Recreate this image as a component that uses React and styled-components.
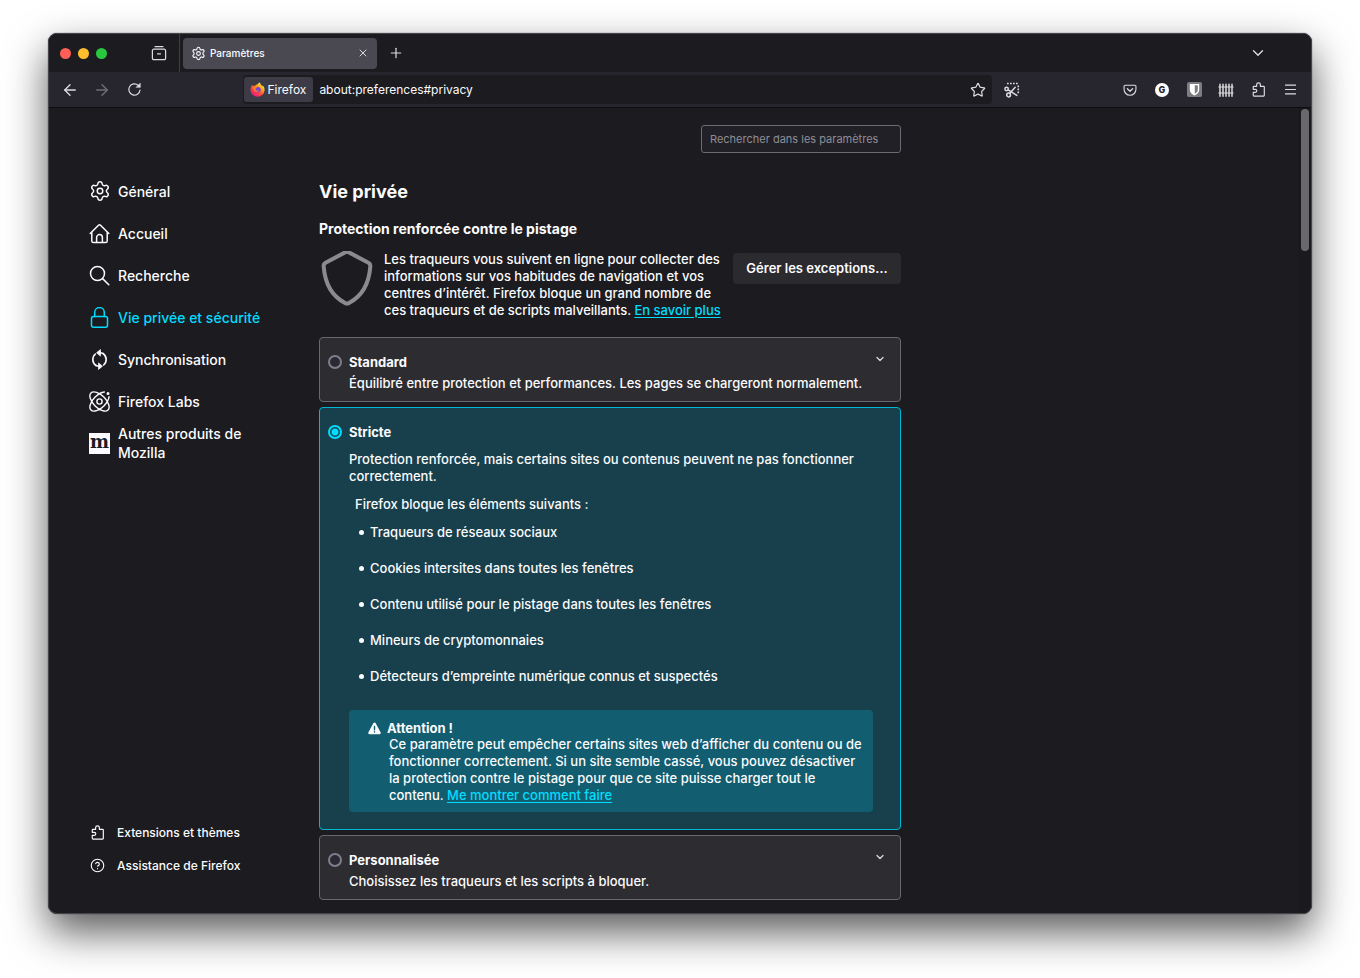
import React, { useState } from "react";
import styled, { createGlobalStyle } from "styled-components";
import {
  ArrowLeft,
  ArrowRight,
  ChevronDown,
  CircleHelp,
  Menu,
  Plus,
  Settings,
  Star,
  X,
} from "lucide-react";

const GlobalStyle = createGlobalStyle`
  * {
    box-sizing: border-box;
  }
  body {
    margin: 0;
    background: #fff;
    color: #fbfbfe;
    font-family: Inter, "Liberation Sans", sans-serif;
    font-size: 13px;
    font-weight: 500;
    line-height: 17px;
  }
  button, input {
    font: inherit;
    color: inherit;
  }
  svg {
    display: block;
    flex-shrink: 0;
  }
`;

const Desktop = styled.div`
  display: flex;
  min-height: 100vh;
  padding: 33px 48px 64px;
`;

const Window = styled.div`
  flex: 1;
  min-width: 0;
  display: flex;
  flex-direction: column;
  overflow: hidden;
  border: 1px solid #45454a;
  border-radius: 9px;
  background: #1c1b1f;
  box-shadow: 0 18px 40px rgba(0, 0, 0, 0.65), 0 0 1px #000;
`;

const TabBar = styled.header`
  display: flex;
  align-items: center;
  height: 38px;
  padding-left: 11px;
  background: #1c1b1f;
`;

const Lights = styled.div`
  display: flex;
  gap: 7px;
`;

const Light = styled.span`
  width: 11px;
  height: 11px;
  border-radius: 50%;
  background: ${(props) => props.color};
`;

const IconButton = styled.button`
  display: flex;
  align-items: center;
  justify-content: center;
  flex-shrink: 0;
  width: 32px;
  height: 28px;
  padding: 0;
  border: 0;
  background: none;
  color: #dcdce0;
  opacity: ${(props) => (props.disabled ? 0.4 : 1)};
`;

const HistoryButton = styled(IconButton)`
  margin-left: 36px;
`;

const TabDivider = styled.span`
  align-self: stretch;
  width: 1px;
  margin: 0 3px 0 4px;
  background: #3f3f44;
`;

const Tab = styled.div`
  display: flex;
  align-items: center;
  gap: 4px;
  width: 194px;
  height: 31px;
  margin-right: 3px;
  padding: 0 6px 0 8px;
  border-radius: 4px;
  background: #4a4951;
  font-size: 10px;
`;

const TabTitle = styled.span`
  flex: 1;
`;

const CloseButton = styled(IconButton)`
  width: 16px;
  height: 16px;
`;

const ListTabs = styled(IconButton)`
  margin-left: auto;
  margin-right: 37px;
`;

const Toolbar = styled.div`
  display: flex;
  align-items: center;
  height: 36px;
  padding: 0 5px;
  background: #27262f;
  border-bottom: 1px solid #0e0d11;
`;

const Spacer = styled.span`
  flex: 1;
`;

const UrlBar = styled.div`
  flex: 0 1 749px;
  display: flex;
  align-items: center;
  height: 29px;
  margin: 0 4px 0 6px;
  padding: 0 0 0 1px;
  border-radius: 4px;
  background: #1c1b1f;
  font-weight: 400;
`;

const Identity = styled.button`
  display: flex;
  align-items: center;
  gap: 3px;
  height: 25px;
  padding: 0 7px 0 6px;
  border: 0;
  border-radius: 3px;
  background: #3d3c46;
  font-size: 12px;
`;

const UrlInput = styled.input`
  flex: 1;
  min-width: 0;
  padding: 0 6px;
  border: 0;
  outline: 0;
  background: none;
  font-size: 12px;
`;

const StarButton = styled(IconButton)`
  width: 28px;
`;

const GBadge = styled.span`
  width: 14px;
  height: 14px;
  border-radius: 50%;
  background: #fff;
  color: #27262f;
  font-size: 9px;
  font-weight: 800;
  line-height: 14px;
  text-align: center;
`;

const Page = styled.div`
  flex: 1;
  display: flex;
`;

const Sidebar = styled.aside`
  display: flex;
  flex-direction: column;
  justify-content: space-between;
  flex-shrink: 0;
  width: 270px;
  padding: 62px 0 31px 40px;
`;

const List = styled.ul`
  margin: 0;
  padding: 0;
  list-style: none;
`;

const NavLink = styled.a`
  display: flex;
  align-items: center;
  gap: 8px;
  width: 184px;
  height: 42px;
  color: ${(props) => (props.$active ? "#00ddff" : "#fbfbfe")};
  font-size: 14px;
  line-height: 19px;
  text-decoration: none;
`;

const NavIcon = styled.span`
  display: flex;
  justify-content: center;
  flex-shrink: 0;
  width: 21px;
`;

const FooterLink = styled.a`
  display: flex;
  align-items: center;
  gap: 12px;
  height: 33px;
  padding-left: 1px;
  color: #fbfbfe;
  font-size: 12px;
  text-decoration: none;
`;

const MozillaMark = styled.span`
  width: 21px;
  height: 21px;
  background: #fbfbfe;
  color: #1c1b1f;
  font-family: "DejaVu Serif", serif;
  font-size: 18px;
  font-weight: 700;
  line-height: 18px;
  text-align: center;
`;

const Main = styled.main`
  flex: 0 1 582px;
  min-width: 0;
  padding: 17px 0 12px;
`;

const SearchField = styled.input`
  display: block;
  width: 200px;
  height: 28px;
  margin-left: auto;
  padding: 0 8px;
  border: 1px solid #6b6b72;
  border-radius: 3px;
  background: #212026;
  font-size: 11px;
  font-weight: 400;

  &::placeholder {
    color: #8e8e96;
    opacity: 1;
  }
`;

const Title = styled.h1`
  margin: 27px 0 15px;
  font-size: 18px;
  font-weight: 700;
  line-height: 24px;
`;

const Subtitle = styled.h2`
  margin: 0 0 12px;
  font-size: 14px;
  font-weight: 700;
  line-height: 20px;
`;

const Intro = styled.div`
  display: flex;
  align-items: flex-start;
  margin-bottom: 18px;
`;

const IntroText = styled.p`
  flex: 1;
  margin: 0 12px 0 9px;
`;

const ExceptionsButton = styled.button`
  flex-shrink: 0;
  min-width: 168px;
  height: 31px;
  margin-top: 2px;
  padding: 0 12px;
  border: 0;
  border-radius: 4px;
  background: #2b2a2f;
  font-weight: 600;
`;

const TextLink = styled.a`
  color: #00ddff;
  text-decoration: underline;
  text-underline-offset: 2px;
`;

const Options = styled.div`
  display: grid;
  gap: 5px;
`;

const Card = styled.section`
  padding: 14px 8px ${(props) => (props.$active ? 17 : 9)}px;
  border: 1px solid ${(props) => (props.$active ? "#00b8d4" : "#68686e")};
  border-radius: 4px;
  background: ${(props) => (props.$active ? "#18404c" : "#2d2c31")};
`;

const CardHead = styled.div`
  display: flex;
  align-items: center;
  height: 20px;
`;

const RadioLabel = styled.label`
  flex: 1;
  display: flex;
  align-items: center;
  gap: 7px;
  font-weight: 700;
`;

const Radio = styled.input`
  appearance: none;
  width: 14px;
  height: 14px;
  margin: 0;
  border: 2px solid #7f7e8c;
  border-radius: 50%;
  background: #2b2a33;

  &:checked {
    border-color: #00ddff;
    background: radial-gradient(circle, #00ddff 3px, #18404c 4px);
  }
`;

const ExpandButton = styled(IconButton)`
  width: 24px;
  height: 16px;
  margin-bottom: 6px;
`;

const CardBody = styled.div`
  padding: ${(props) => (props.$active ? 9 : 3)}px 19px 0 21px;

  p {
    margin: 0;
  }
`;

const BlockedTitle = styled.h3`
  margin: 11px 0 1px 6px;
  font-size: 13px;
  font-weight: 500;
  line-height: 17px;
`;

const BlockedList = styled.ul`
  margin: 0 0 16px;
  padding: 0 0 0 12px;
  list-style: none;
`;

const BlockedItem = styled.li`
  display: flex;
  align-items: center;
  gap: 6px;
  height: 36px;

  &::before {
    content: "";
    width: 5px;
    height: 5px;
    margin-left: -2px;
    border-radius: 50%;
    background: currentColor;
  }
`;

const Warning = styled.div`
  padding: 10px 8px 8px 19px;
  border-radius: 4px;
  background: #125d6f;
`;

const WarningTitle = styled.div`
  display: flex;
  align-items: center;
  gap: 6px;
  height: 16px;
  font-weight: 700;
`;

const WarningText = styled.p`
  padding-left: 21px;
`;

const ScrollTrack = styled.div`
  width: 13px;
  margin-left: auto;
  padding: 1px 2px;
  background: #1a191d;
`;

const ScrollThumb = styled.div`
  height: 142px;
  margin-left: 1px;
  border-radius: 4px;
  background: #69686d;
`;

const Icon = ({ size, box = 16, width = 1.25, children }) => (
  <svg
    width={size}
    height={size}
    viewBox={`0 0 ${box} ${box}`}
    fill="none"
    stroke="currentColor"
    strokeWidth={width}
    strokeLinecap="round"
    strokeLinejoin="round"
    aria-hidden="true"
  >
    {children}
  </svg>
);

const HistoryIcon = () => (
  <Icon size={16}>
    <path d="M4 1.6h8M2.8 4.2h10.4a1.4 1.4 0 0 1 1.4 1.4v7.6a1.4 1.4 0 0 1-1.4 1.4H2.8a1.4 1.4 0 0 1-1.4-1.4V5.6a1.4 1.4 0 0 1 1.4-1.4zM6.5 8.8h3" />
  </Icon>
);

const ReloadIcon = () => (
  <Icon size={15}>
    <path d="M13.9 8.6a6 6 0 1 1-2-5.1l1.4 1.4" />
    <path d="M14.2 1.5v4.2H10z" fill="currentColor" strokeWidth="0.6" />
  </Icon>
);

const FirefoxIcon = () => (
  <svg width="15" height="15" viewBox="0 0 16 16" aria-hidden="true">
    <defs>
      <linearGradient id="fox" x1="0.85" y1="0.1" x2="0.2" y2="0.95">
        <stop offset="0" stopColor="#fff44f" />
        <stop offset="0.3" stopColor="#ffa21f" />
        <stop offset="0.6" stopColor="#ff4a3c" />
        <stop offset="1" stopColor="#e31587" />
      </linearGradient>
    </defs>
    <path
      fill="url(#fox)"
      d="M10 .4c1 .7 1.5 1.7 1.7 2.8.9.5 1.3 1 1.5 1.5.2-.4.2-.8.2-1.2C15 5 15.7 7 15.5 9a7.400 7.400 0 0 1-7.500 6.700A7.500 7.500 0 0 1 .5 8.500C.4 6.300 1.300 4.300 2.600 3c0 .6.100 1.100.3 1.500.8-.5 1.700-.6 2.500-.4C6 3.200 7 2.700 7.900 2.700 8.400 1.800 9.200 1 10 .4z"
    />
    <circle cx="8.4" cy="8.2" r="2.9" fill="#7542e5" />
    <path
      fill="#ff8a1f"
      d="M3.5 5.2c1.5-.5 3-.2 4 .7-.3.9-1.3 1.1-1.8 1.3-.3.8.2 1.6 1.2 1.9 1.1.3 1.8-.3 2.7 0-.5 1-1.7 1.5-3 1.3-1.8-.3-3.3-2-3.1-5.2z"
    />
  </svg>
);

const ScreenshotIcon = () => (
  <Icon size={16} width={1.5}>
    <path d="M3 1.5h12M14.3 3.5V12" strokeWidth="1.6" strokeDasharray="1.7 1.3" strokeLinecap="butt" />
    <circle cx="2.6" cy="7" r="1.7" />
    <circle cx="4.6" cy="13" r="1.9" />
    <path d="M4.2 7.8l8.6 5.6M5.6 11.4l5.6-6.2" />
  </Icon>
);

const PocketIcon = () => (
  <Icon size={14}>
    <path d="M2.5 2.5h11a1.3 1.3 0 0 1 1.3 1.3v3.4a6.8 6.8 0 0 1-13.6 0V3.800a1.300 1.300 0 0 1 1.300-1.300z" />
    <path d="M5 6.6l3 2.8 3-2.8" strokeWidth="1.5" />
  </Icon>
);

const BitwardenIcon = () => (
  <svg width="15" height="15" viewBox="0 0 16 16" aria-hidden="true">
    <rect width="16" height="16" rx="2" fill="#7d7c80" />
    <path fill="#fff" d="M3 2h10v6.5c0 2.6-2.3 4.5-5 5.8-2.7-1.3-5-3.2-5-5.8z" />
    <path fill="#7d7c80" d="M8.3 3.5h3.2v5c0 1.7-1.5 3-3.2 4z" />
  </svg>
);

const FenceIcon = () => (
  <Icon size={16} width={1.3}>
    <path d="M2 2.2v12M5 2.2v12M8 2.2v12M11 2.2v12M14 2.2v12" strokeWidth="1.5" />
    <path d="M.8 5h14.4M.8 11h14.4" strokeWidth="1" />
  </Icon>
);

const ExtensionIcon = () => (
  <Icon size={15}>
    <path d="M6 4.6H3.2a.8.8 0 0 0-.8.8V7.8h2.2a1.5 1.5 0 0 1 0 3.2H2.4v3.2a.8.8 0 0 0 .8.8h10.2a.8.8 0 0 0 .8-.8V5.4a.8.8 0 0 0-.8-.8H10V2.9a2 2 0 0 0-4 0z" />
  </Icon>
);

const HomeIcon = () => (
  <Icon size={21} box={21} width={1.5}>
    <path d="M1.2 10.5l8.3-8.3a1.4 1.4 0 0 1 2 0l8.3 8.3M2.8 9v9a1.6 1.6 0 0 0 1.6 1.6h12.2a1.6 1.6 0 0 0 1.6-1.6V9M7.6 19.5v-5a2.9 2.9 0 0 1 5.8 0v5" />
  </Icon>
);

const SearchIcon = () => (
  <Icon size={21} box={21} width={1.5}>
    <circle cx="8.5" cy="8.5" r="7" />
    <path d="M13.6 13.6l6.2 6.2" />
  </Icon>
);

const LockIcon = () => (
  <Icon size={21} box={21} width={1.5}>
    <rect x="2.5" y="9.5" width="16" height="10.7" rx="2" />
    <path d="M5.7 9.5V5.4a4.8 4.8 0 0 1 9.6 0v4.1" />
  </Icon>
);

const SyncIcon = () => (
  <Icon size={21} box={21} width={1.6}>
    <path d="M6.3 16.3A7.2 7.2 0 0 1 7.2 4.4M11 3.8a7.200 7.200 0 0 1 5.400 10.900M14.200 4.700M10.400 17.200a7.200 7.200 0 0 0 3.600-1" strokeWidth="0" />
    <path d="M7 16.500A7.200 7.200 0 0 1 6.400 5M14 4.500a7.200 7.200 0 0 1 .6 11.500" />
    <path d="M11.200.8L7.600 3.800l3.600 3zM9.800 14.200l3.600 3-3.600 3z" fill="currentColor" strokeWidth="0.8" />
    <path d="M11 3.800q1.600 0 3 .7M10 17.200q-1.600 0-3-.7" />
  </Icon>
);

const LabsIcon = () => (
  <Icon size={21} box={21} width={1.4}>
    <ellipse cx="10.5" cy="10.5" rx="12.1" ry="6.2" transform="rotate(45 10.5 10.5)" />
    <ellipse
      cx="10.5"
      cy="10.5"
      rx="12.1"
      ry="6.2"
      transform="rotate(-45 10.5 10.5)"
      pathLength="100"
      strokeDasharray="86 14"
      strokeDashoffset="-7"
    />
    <circle cx="10.5" cy="10.5" r="2.6" />
    <circle cx="19" cy="2.6" r="0.8" fill="currentColor" />
  </Icon>
);

const ShieldIcon = () => (
  <svg width="56" height="58" viewBox="0 0 56 58" fill="none" aria-hidden="true">
    <path
      d="M26 1.400a4 4 0 0 1 4 0L49 11.500a4 4 0 0 1 2.300 4c-1.300 18-9 30-21.300 36.500a4 4 0 0 1-4 0C13.700 45.500 6 33.500 4.700 15.500a4 4 0 0 1 2.300-4z"
      stroke="#8b8b8d"
      strokeWidth="4"
      strokeLinejoin="round"
    />
  </svg>
);

const WarningIcon = () => (
  <svg width="13" height="13" viewBox="0 0 16 16" aria-hidden="true">
    <path
      fill="#fbfbfe"
      d="M6.7 1.3a1.5 1.5 0 0 1 2.6 0l6.3 11.5a1.5 1.5 0 0 1-1.3 2.2H1.700A1.500 1.500 0 0 1 .4 12.800z"
    />
    <path d="M8 5.5v4M8 12v.3" stroke="#125d6f" strokeWidth="1.7" strokeLinecap="round" />
  </svg>
);

const navItems = [
  { label: "Général", icon: <Settings size={22} strokeWidth={1.6} /> },
  { label: "Accueil", icon: <HomeIcon /> },
  { label: "Recherche", icon: <SearchIcon /> },
  { label: "Vie privée et sécurité", icon: <LockIcon />, active: true },
  { label: "Synchronisation", icon: <SyncIcon /> },
  { label: "Firefox Labs", icon: <LabsIcon /> },
  { label: "Autres produits de Mozilla", icon: <MozillaMark aria-hidden="true">m</MozillaMark> },
];

const blocked = [
  "Traqueurs de réseaux sociaux",
  "Cookies intersites dans toutes les fenêtres",
  "Contenu utilisé pour le pistage dans toutes les fenêtres",
  "Mineurs de cryptomonnaies",
  "Détecteurs d’empreinte numérique connus et suspectés",
];

const Option = ({ name, value, onSelect, expandable, children }) => {
  const active = value === name;
  return (
    <Card $active={active}>
      <CardHead>
        <RadioLabel>
          <Radio
            type="radio"
            name="protection"
            checked={active}
            onChange={() => onSelect(name)}
          />
          {name}
        </RadioLabel>
        {expandable && (
          <ExpandButton aria-label={`Développer ${name}`}>
            <ChevronDown size={12} strokeWidth={2.5} />
          </ExpandButton>
        )}
      </CardHead>
      <CardBody $active={active}>{children}</CardBody>
    </Card>
  );
};

const App = () => {
  const [level, setLevel] = useState("Stricte");

  return (
    <Desktop>
      <GlobalStyle />
      <Window>
        <TabBar>
          <Lights>
            <Light color="#ff5f57" />
            <Light color="#febc2e" />
            <Light color="#28c840" />
          </Lights>
          <HistoryButton aria-label="Historique">
            <HistoryIcon />
          </HistoryButton>
          <TabDivider />
          <Tab>
            <Settings size={15} strokeWidth={1.7} />
            <TabTitle>Paramètres</TabTitle>
            <CloseButton aria-label="Fermer l’onglet">
              <X size={12} strokeWidth={2} />
            </CloseButton>
          </Tab>
          <IconButton aria-label="Nouvel onglet">
            <Plus size={16} strokeWidth={1.8} />
          </IconButton>
          <ListTabs aria-label="Lister les onglets">
            <ChevronDown size={18} strokeWidth={1.8} />
          </ListTabs>
        </TabBar>

        <Toolbar>
          <IconButton aria-label="Page précédente">
            <ArrowLeft size={18} strokeWidth={1.8} />
          </IconButton>
          <IconButton aria-label="Page suivante" disabled>
            <ArrowRight size={18} strokeWidth={1.8} />
          </IconButton>
          <IconButton aria-label="Actualiser">
            <ReloadIcon />
          </IconButton>
          <Spacer />
          <UrlBar>
            <Identity>
              <FirefoxIcon />
              Firefox
            </Identity>
            <UrlInput aria-label="Adresse" defaultValue="about:preferences#privacy" />
            <StarButton aria-label="Marquer cette page">
              <Star size={16} strokeWidth={1.8} />
            </StarButton>
          </UrlBar>
          <IconButton aria-label="Capture d’écran">
            <ScreenshotIcon />
          </IconButton>
          <Spacer />
          <IconButton aria-label="Pocket">
            <PocketIcon />
          </IconButton>
          <IconButton>
            <GBadge>G</GBadge>
          </IconButton>
          <IconButton aria-label="Bitwarden">
            <BitwardenIcon />
          </IconButton>
          <IconButton aria-label="Conteneurs">
            <FenceIcon />
          </IconButton>
          <IconButton aria-label="Extensions">
            <ExtensionIcon />
          </IconButton>
          <IconButton aria-label="Menu">
            <Menu size={15} strokeWidth={1.8} />
          </IconButton>
        </Toolbar>

        <Page>
          <Sidebar>
            <nav>
              <List>
                {navItems.map((item) => (
                  <li key={item.label}>
                    <NavLink href="#" $active={item.active}>
                      <NavIcon>{item.icon}</NavIcon>
                      {item.label}
                    </NavLink>
                  </li>
                ))}
              </List>
            </nav>
            <List>
              <li>
                <FooterLink href="#">
                  <ExtensionIcon />
                  Extensions et thèmes
                </FooterLink>
              </li>
              <li>
                <FooterLink href="#">
                  <CircleHelp size={15} strokeWidth={1.8} />
                  Assistance de Firefox
                </FooterLink>
              </li>
            </List>
          </Sidebar>

          <Main>
            <SearchField
              type="search"
              aria-label="Rechercher dans les paramètres"
              placeholder="Rechercher dans les paramètres"
            />
            <Title>Vie privée</Title>
            <Subtitle>Protection renforcée contre le pistage</Subtitle>
            <Intro>
              <ShieldIcon />
              <IntroText>
                Les traqueurs vous suivent en ligne pour collecter des informations sur vos
                habitudes de navigation et vos centres d’intérêt. Firefox bloque un grand nombre
                de ces traqueurs et de scripts malveillants.{" "}
                <TextLink href="#">En savoir plus</TextLink>
              </IntroText>
              <ExceptionsButton>Gérer les exceptions…</ExceptionsButton>
            </Intro>

            <Options>
              <Option name="Standard" value={level} onSelect={setLevel} expandable>
                <p>Équilibré entre protection et performances. Les pages se chargeront normalement.</p>
              </Option>
              <Option name="Stricte" value={level} onSelect={setLevel}>
                <p>
                  Protection renforcée, mais certains sites ou contenus peuvent ne pas fonctionner
                  correctement.
                </p>
                <BlockedTitle>Firefox bloque les éléments suivants :</BlockedTitle>
                <BlockedList>
                  {blocked.map((item) => (
                    <BlockedItem key={item}>{item}</BlockedItem>
                  ))}
                </BlockedList>
                <Warning>
                  <WarningTitle>
                    <WarningIcon />
                    Attention !
                  </WarningTitle>
                  <WarningText>
                    Ce paramètre peut empêcher certains sites web d’afficher du contenu ou de
                    fonctionner correctement. Si un site semble cassé, vous pouvez désactiver la
                    protection contre le pistage pour que ce site puisse charger tout le contenu.{" "}
                    <TextLink href="#">Me montrer comment faire</TextLink>
                  </WarningText>
                </Warning>
              </Option>
              <Option name="Personnalisée" value={level} onSelect={setLevel} expandable>
                <p>Choisissez les traqueurs et les scripts à bloquer.</p>
              </Option>
            </Options>
          </Main>

          <ScrollTrack>
            <ScrollThumb />
          </ScrollTrack>
        </Page>
      </Window>
    </Desktop>
  );
};

export default App;
